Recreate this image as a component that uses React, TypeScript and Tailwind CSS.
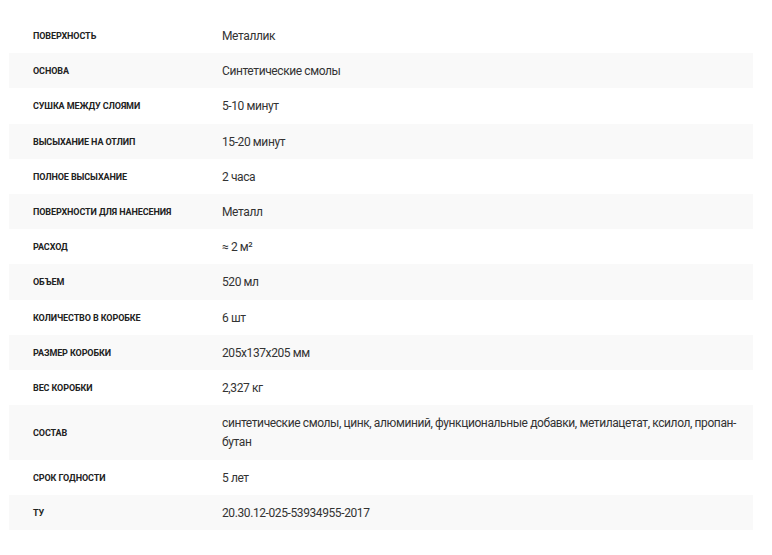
const specs: [string, string][] = [
  ['Поверхность', 'Металлик'],
  ['Основа', 'Синтетические смолы'],
  ['Сушка между слоями', '5-10 минут'],
  ['Высыхание на отлип', '15-20 минут'],
  ['Полное высыхание', '2 часа'],
  ['Поверхности для нанесения', 'Металл'],
  ['Расход', '≈ 2 м²'],
  ['Объем', '520 мл'],
  ['Количество в коробке', '6 шт'],
  ['Размер коробки', '205x137x205 мм'],
  ['Вес коробки', '2,327 кг'],
  ['Состав', 'синтетические смолы, цинк, алюминий, функциональные добавки, метилацетат, ксилол, пропан-бутан'],
  ['Срок годности', '5 лет'],
  ['ТУ', '20.30.12-025-53934955-2017'],
]

export default function App() {
  return (
    <div className="min-h-[555px] bg-white pt-[18px] pl-[9px] pr-[19px] font-['Roboto',sans-serif] text-[#333]">
      <table className="w-full border-collapse">
        <tbody>
          {specs.map(([label, value], i) => (
            <tr key={label} className={i % 2 === 1 ? 'bg-[#f9f9f9]' : 'bg-white'}>
              <td className="w-[213px] pt-[9px] pb-[7px] pl-6 pr-2 align-middle text-[9px] leading-[19.2px] font-bold uppercase tracking-[-0.1px] text-[#222]">
                {label}
              </td>
              <td className="pt-[9px] pb-[7px] pr-2 text-[12px] leading-[19.2px] tracking-[-0.4px] text-[#333]">
                {value}
              </td>
            </tr>
          ))}
        </tbody>
      </table>
    </div>
  )
}
